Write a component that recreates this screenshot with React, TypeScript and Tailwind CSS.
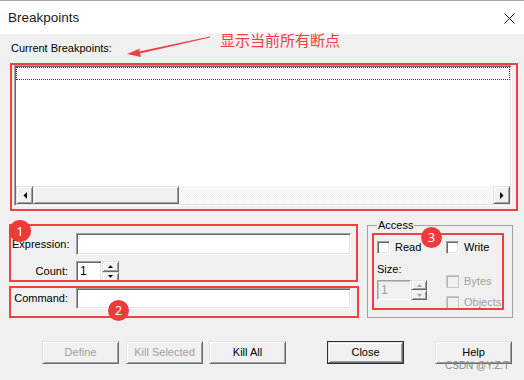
import React from "react";

const raised =
  "border border-t-[#e3e3e3] border-l-[#e3e3e3] border-r-[#696969] border-b-[#696969] shadow-[inset_1px_1px_0_#ffffff,inset_-1px_-1px_0_#a0a0a0] bg-[#f0f0f0]";
const sunken =
  "border border-t-[#a0a0a0] border-l-[#a0a0a0] border-r-white border-b-white shadow-[inset_1px_1px_0_#696969,inset_-1px_-1px_0_#e3e3e3]";

function TriLeft() {
  return (
    <svg width="4" height="7" viewBox="0 0 4 7">
      <polygon points="4,0 4,7 0.5,3.5" fill="#000" />
    </svg>
  );
}
function TriRight() {
  return (
    <svg width="4" height="7" viewBox="0 0 4 7">
      <polygon points="0,0 0,7 3.5,3.5" fill="#000" />
    </svg>
  );
}
function TriUp({ c }: { c: string }) {
  return (
    <svg width="5" height="3" viewBox="0 0 5 3">
      <polygon points="0,3 5,3 2.5,0.2" fill={c} />
    </svg>
  );
}
function TriDown({ c }: { c: string }) {
  return (
    <svg width="5" height="3" viewBox="0 0 5 3">
      <polygon points="0,0 5,0 2.5,2.8" fill={c} />
    </svg>
  );
}

function Spin({ w, c }: { w: string; c: string }) {
  return (
    <div className={`flex flex-col ${w} h-full`}>
      <div className={`${raised} flex-1 flex items-center justify-center`}>
        <TriUp c={c} />
      </div>
      <div className={`${raised} flex-1 flex items-center justify-center`}>
        <TriDown c={c} />
      </div>
    </div>
  );
}

function Check({ label, disabled }: { label: string; disabled?: boolean }) {
  return (
    <div className="flex items-center h-[13px]">
      <div
        className={`w-[13px] h-[13px] ${
          disabled
            ? "border border-[#c8c8c8] bg-[#f0f0f0] shadow-[inset_1px_1px_0_#b4b4b4]"
            : `${sunken} bg-white`
        }`}
      />
      <span
        className={`ml-[5px] whitespace-nowrap ${
          disabled ? "text-[#a0a0a0]" : "text-black"
        }`}
      >
        {label}
      </span>
    </div>
  );
}

function Btn({
  label,
  disabled,
  className,
}: {
  label: string;
  disabled?: boolean;
  className: string;
}) {
  return (
    <div
      className={`${raised} ${className} h-[23px] flex items-center justify-center ${
        disabled ? "text-[#a0a0a0]" : "text-black"
      }`}
    >
      {label}
    </div>
  );
}

export default function App() {
  return (
    <div className="relative w-[524px] h-[380px] overflow-hidden bg-[#f0f0f0] font-['Liberation_Sans',Arial,sans-serif] text-[11px] leading-[13px] text-black">
      {/* Title bar */}
      <div className="h-[34px] bg-white border-t border-[#a8a8a8] flex items-center justify-between pl-[8px] pr-[9px]">
        <span className="text-[13.5px] leading-[16px] mt-[1px] text-[#1a1a1a]">
          Breakpoints
        </span>
        <svg width="11" height="11" viewBox="0 0 11 11" className="mt-[1px]">
          <path
            d="M0.5 0.5L10.5 10.5M10.5 0.5L0.5 10.5"
            stroke="#222"
            strokeWidth="1"
          />
        </svg>
      </div>

      {/* Current breakpoints */}
      <div className="ml-[11px] mt-[8px] whitespace-nowrap">Current Breakpoints:</div>

      <div
        className={`${sunken} bg-white ml-[14px] mt-[10px] w-[498px] h-[141px] p-[1px] flex flex-col`}
      >
        <div className="h-[13px] border border-dotted border-[#333]" />
        <div className="flex-1" />
        <div className="h-[18px] flex">
          <div className={`${raised} w-[17px] h-full flex items-center justify-center`}>
            <TriLeft />
          </div>
          <div className={`${raised} w-[146px] h-full`} />
          <div className="flex-1 h-full bg-[repeating-conic-gradient(#f0f0f0_0_25%,#ffffff_0_50%)] bg-[length:2px_2px]" />
          <div className={`${raised} w-[17px] h-full flex items-center justify-center`}>
            <TriRight />
          </div>
        </div>
      </div>

      {/* Middle section */}
      <div className="flex mt-[13px]">
        <div className="ml-[12px] mt-[14px] flex flex-col">
          <div className="flex items-center h-[22px]">
            <span className="w-[56px] text-right whitespace-nowrap">Expression:</span>
            <div className={`${sunken} bg-white ml-[8px] w-[275px] h-full`} />
          </div>
          <div className="flex items-center h-[21px] mt-[6px]">
            <span className="w-[56px] text-right whitespace-nowrap">Count:</span>
            <div className="ml-[8px] flex h-full">
              <div className={`${sunken} bg-white w-[26px] h-full flex items-center pl-[3px] text-[12px]`}>
                1
              </div>
              <Spin w="w-[17px]" c="#000" />
            </div>
          </div>
          <div className="flex items-center h-[21px] mt-[6px]">
            <span className="w-[56px] text-right whitespace-nowrap">Command:</span>
            <div className={`${sunken} bg-white ml-[8px] w-[275px] h-full`} />
          </div>
        </div>

        <fieldset className="ml-[16px] w-[146px] h-[99px] border border-[#a0a0a0] pt-[9px] pl-[9px]">
          <legend className="ml-0 px-[1px] leading-[13px]">Access</legend>
          <div className="flex">
            <div className="w-[69px] flex flex-col">
              <Check label="Read" />
              <div className="mt-[9px] h-[13px]">Size:</div>
              <div className="mt-[4px] h-[20px] flex">
                <div className="w-[34px] h-full border border-t-[#a0a0a0] border-l-[#a0a0a0] border-r-white border-b-white shadow-[inset_1px_1px_0_#c8c8c8] bg-[#f0f0f0] flex items-center pl-[3px] text-[#a0a0a0] text-[12px]">
                  1
                </div>
                <Spin w="w-[16px]" c="#a0a0a0" />
              </div>
            </div>
            <div className="flex flex-col">
              <Check label="Write" />
              <div className="mt-[21px]">
                <Check label="Bytes" disabled />
              </div>
              <div className="mt-[8px]">
                <Check label="Objects" disabled />
              </div>
            </div>
          </div>
        </fieldset>
      </div>

      {/* Buttons */}
      <div className="flex mt-[23px]">
        <Btn label="Define" disabled className="ml-[42px] w-[77px]" />
        <Btn label="Kill Selected" disabled className="ml-[7px] w-[77px]" />
        <Btn label="Kill All" className="ml-[6px] w-[77px]" />
        <div className="ml-[41px] w-[77px] h-[23px] border border-[#303030] flex">
          <div className={`${raised} flex-1 h-full flex items-center justify-center`}>Close</div>
        </div>
        <Btn label="Help" className="ml-[31px] w-[77px]" />
      </div>

      {/* Annotations */}
      <div className="absolute left-[10px] top-[63px] w-[508px] h-[148px] border-2 border-[#f23f3f]" />
      <div className="absolute left-[9px] top-[224px] w-[349px] h-[58px] border-2 border-[#f23f3f]" />
      <div className="absolute left-[9px] top-[286px] w-[350px] h-[32px] border-2 border-[#f23f3f]" />
      <div className="absolute left-[372px] top-[233px] w-[132px] h-[77px] border-2 border-[#f23f3f]" />

      <div className="absolute left-[9px] top-[220px] w-[22px] h-[22px] rounded-full bg-[#ee3a3a] text-white text-[13px] leading-[22px] text-center font-['Noto_Sans',sans-serif]">
        1
      </div>
      <div className="absolute left-[108px] top-[300px] w-[21px] h-[21px] rounded-full bg-[#ee3a3a] text-white text-[13px] leading-[21px] text-center font-['Noto_Sans',sans-serif]">
        2
      </div>
      <div className="absolute left-[421px] top-[227px] w-[21px] h-[21px] rounded-full bg-[#ee3a3a] text-white text-[13px] leading-[21px] text-center font-['Noto_Sans',sans-serif]">
        3
      </div>

      <div className="absolute left-[220px] top-[32px] text-[15px] leading-[15px] text-[#f0403f] whitespace-nowrap font-['Noto_Sans_CJK_SC',sans-serif]">
        显示当前所有断点
      </div>

      <svg className="absolute left-[120px] top-[30px]" width="100" height="32" viewBox="0 0 100 32">
        <polygon
          points="7,24 20,18.5 19,21.5 90,6.5 90,7.5 20,23.5 21,27"
          fill="#f0403f"
        />
      </svg>

      <div className="absolute left-[445px] top-[360px] text-[10px] leading-[12px] text-[#8a8a8a] whitespace-nowrap">
        CSDN @Y.Z.T
      </div>
    </div>
  );
}
